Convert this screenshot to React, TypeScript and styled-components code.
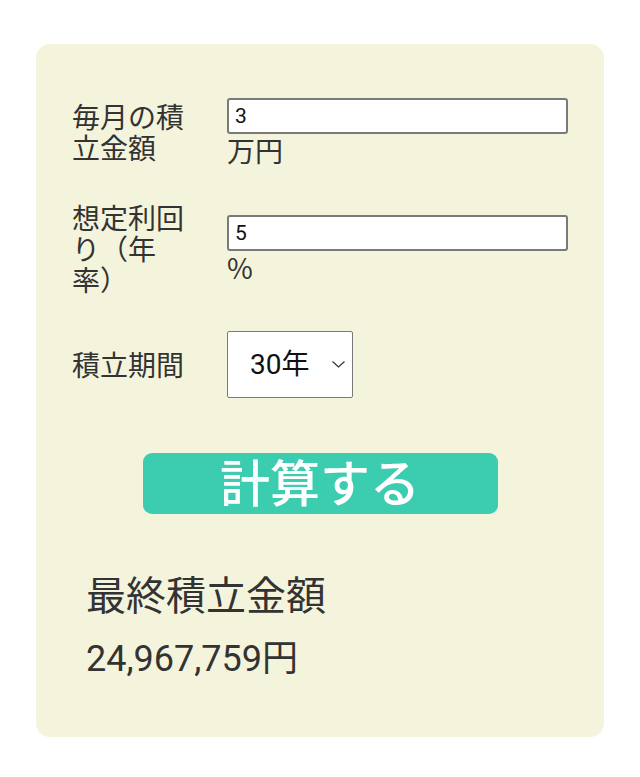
import React from "react";
import styled, { createGlobalStyle } from "styled-components";

const GlobalStyle = createGlobalStyle`
  html, body {
    margin: 0;
    padding: 0;
    background: #ffffff;
  }
  body {
    font-family: "Noto Sans CJK JP", "Noto Sans", sans-serif;
    color: #333333;
  }
`;

const Page = styled.div`
  padding: 44px 36px 40px;
`;

const Card = styled.div`
  background: #f4f4dc;
  border-radius: 14px;
  padding: 54px 36px 0;
  height: 693px;
  box-sizing: border-box;
`;

const Form = styled.div`
  display: flex;
  flex-direction: column;
  gap: 36px;
`;

const Row = styled.div`
  display: grid;
  grid-template-columns: 120px 1fr;
  column-gap: 35px;
  align-items: center;
`;

const Label = styled.label`
  font-size: 28px;
  line-height: 31px;
  color: #333333;
`;

const Field = styled.div`
  display: flex;
  flex-direction: column;
  align-items: flex-start;
`;

const TextInput = styled.input`
  box-sizing: border-box;
  width: 100%;
  height: 36px;
  border: 2px solid #7a7a7a;
  border-radius: 3px;
  background: #ffffff;
  padding: 0 6px;
  font-family: "Roboto", "Noto Sans CJK JP", sans-serif;
  font-size: 21px;
  color: #111111;
  outline: none;
`;

const Unit = styled.span`
  font-size: 28px;
  line-height: 32px;
  color: #333333;
`;

const SelectBox = styled.div`
  position: relative;
  width: 126px;
  height: 67px;
`;

const Select = styled.select`
  appearance: none;
  box-sizing: border-box;
  width: 100%;
  height: 100%;
  border: 1.5px solid #7a7a7a;
  border-radius: 2px;
  background: #ffffff;
  padding: 0 0 0 22px;
  font-family: "Roboto", "Noto Sans CJK JP", sans-serif;
  font-size: 28px;
  color: #111111;
  outline: none;
`;

const Chevron = styled.svg`
  position: absolute;
  right: 8px;
  top: 30px;
  width: 13px;
  height: 7px;
  pointer-events: none;
`;

const ButtonWrap = styled.div`
  display: flex;
  justify-content: center;
  margin-top: 55px;
`;

const CalcButton = styled.button`
  box-sizing: border-box;
  width: 355px;
  height: 61px;
  border: none;
  border-radius: 9px;
  background: #3ccdb0;
  color: #ffffff;
  font-family: "Noto Sans CJK JP", sans-serif;
  font-size: 50px;
  line-height: 52px;
  padding: 0 0 8px;
  font-weight: 500;
`;

const Result = styled.div`
  padding: 55px 0 0 14px;
`;

const ResultTitle = styled.div`
  font-size: 40px;
  line-height: 48px;
  color: #333333;
`;

const ResultValue = styled.div`
  margin-top: 22px;
  font-family: "Roboto", "Noto Sans CJK JP", sans-serif;
  font-size: 36px;
  line-height: 40px;
  color: #333333;
`;

export default function App() {
  return (
    <>
      <GlobalStyle />
      <Page>
        <Card>
          <Form>
            <Row>
              <Label>毎月の積立金額</Label>
              <Field>
                <TextInput defaultValue="3" />
                <Unit>万円</Unit>
              </Field>
            </Row>
            <Row>
              <Label>想定利回り（年率）</Label>
              <Field>
                <TextInput defaultValue="5" />
                <Unit>%</Unit>
              </Field>
            </Row>
            <Row>
              <Label>積立期間</Label>
              <Field>
                <SelectBox>
                  <Select defaultValue="30">
                    <option value="10">10年</option>
                    <option value="20">20年</option>
                    <option value="30">30年</option>
                  </Select>
                  <Chevron viewBox="0 0 13 7">
                    <path d="M0.5 0.5 L6.5 6 L12.5 0.5" fill="none" stroke="#333" strokeWidth="1.2" />
                  </Chevron>
                </SelectBox>
              </Field>
            </Row>
          </Form>
          <ButtonWrap>
            <CalcButton>計算する</CalcButton>
          </ButtonWrap>
          <Result>
            <ResultTitle>最終積立金額</ResultTitle>
            <ResultValue>24,967,759円</ResultValue>
          </Result>
        </Card>
      </Page>
    </>
  );
}
